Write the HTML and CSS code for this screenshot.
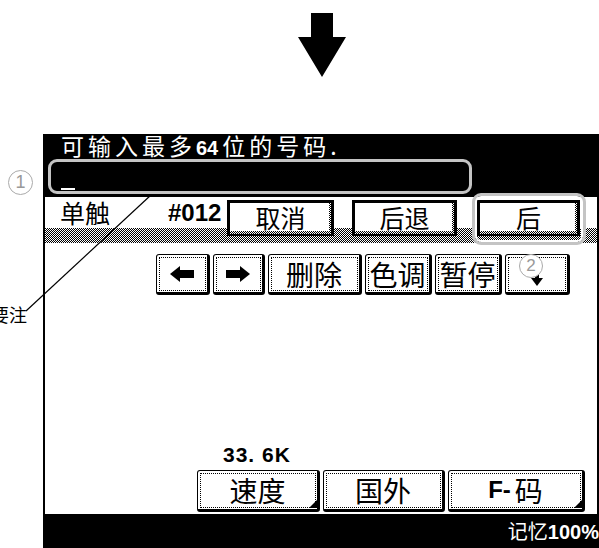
FILE: index.html
```html
<!DOCTYPE html>
<html lang="zh">
<head>
  <meta charset="UTF-8">
  <title>单触</title>
  <link rel="stylesheet" href="styles.css">
</head>
<body>
  <div id="page">
    <div class="drop">
      <svg width="48" height="64" viewBox="0 0 48 64"><path d="M13 0H35V24H48L24 64L0 24H13Z"/></svg>
    </div>

    <div id="screen">
      <div class="head">
        <div class="title">可输入最多<b>64</b>位的号码.</div>
        <div class="field"><span class="cursor"></span></div>
      </div>

      <div class="row2">
        <span class="label">单触</span>
        <span class="num">#012</span>
        <div class="key k-cancel">取消</div>
        <div class="key k-back">后退</div>
        <div class="key k-next">后</div>
      </div>

      <div class="body">
        <div class="tools">
          <div class="pad p-arrow">
            <svg width="24" height="16" viewBox="0 0 24 16"><path d="M0 8L10 0V4H24V12H10V16Z"/></svg>
          </div>
          <div class="pad p-arrow2">
            <svg width="24" height="16" viewBox="0 0 24 16"><path d="M24 8L14 0V4H0V12H14V16Z"/></svg>
          </div>
          <div class="pad p-del">删除</div>
          <div class="pad p-tone">色调</div>
          <div class="pad p-pause">暂停</div>
          <div class="pad p-down">
            <svg width="12" height="22" viewBox="0 0 12 22"><path d="M4 0H8V14H12L6 22L0 14H4Z"/></svg>
          </div>
        </div>

        <div class="speed">33. 6K</div>

        <div class="opts">
          <div class="pad opt o-speed more">速度</div>
          <div class="pad opt o-intl">国外</div>
          <div class="pad opt o-fcode more"><b>F-</b>码</div>
        </div>
      </div>

      <div class="status">记忆<b>100%</b></div>
    </div>

    <!-- 标注 -->
    <svg class="leader" width="599" height="548" viewBox="0 0 599 548"><line x1="151" y1="195" x2="26" y2="311"/></svg>
    <div class="note">要注</div>
    <div class="mark m1">1</div>
    <div class="ring"></div>
    <div class="mark m2">2</div>
  </div>
</body>
</html>
```

FILE: styles.css
```css
*{margin:0;padding:0;}
body{background:#fff;font-family:"Noto Sans CJK SC",sans-serif;color:#000;}

#page{width:599px;height:548px;position:relative;overflow:hidden;}
.drop{padding:13px 0 0 298px;height:64px;}
.drop svg{display:block;fill:#000;}

#screen{margin:57px 0 0 43px;width:556px;background:#000;}

.head{height:63px;}
.title{height:25px;padding-left:18px;color:#fff;font-size:23px;line-height:22px;letter-spacing:4px;white-space:nowrap;}
.title b{font-family:"Liberation Sans",sans-serif;font-size:20px;letter-spacing:0;margin:0 4px 0 0;}
.field{box-sizing:border-box;margin-left:5px;width:424px;height:35px;border:3px solid #c4c4c4;border-radius:9px;position:relative;}
.cursor{display:block;position:absolute;left:10px;bottom:1px;width:14px;height:2px;background:#fff;}

.row2{display:flex;align-items:flex-start;height:46px;margin:0 2px;
  background:linear-gradient(#fff,#fff) 0 0/100% 31px no-repeat,repeating-conic-gradient(#000 0 25%,#fff 0 50%) 0 0/2px 2px;}
.label{width:108px;padding-left:15px;font-size:25px;line-height:30px;}
.num{width:59px;font:bold 24px/32px "Liberation Sans",sans-serif;}
.key{box-sizing:border-box;height:36px;margin-top:3px;border:3px solid #000;border-bottom-width:2px;
  background:linear-gradient(#fff,#fff) 0 0/calc(100% - 2px) calc(100% - 3px) no-repeat,repeating-conic-gradient(#000 0 25%,#fff 0 50%) 0 0/2px 2px;
  font-size:25px;line-height:29px;text-align:center;}
.k-cancel{width:107px;}
.k-back{width:105px;margin-left:18px;}
.k-next{width:103px;margin-left:20px;}

.body{height:271px;margin:0 2px;background:#fff;}
.tools{display:flex;gap:3px;padding:11px 0 0 111px;}
.pad{position:relative;box-sizing:border-box;height:41px;border:1px solid #000;border-right-width:3px;border-bottom-width:3px;border-radius:3px;
  background:#fff;display:flex;align-items:center;justify-content:center;font-size:28px;line-height:1;}
.pad::before{content:"";position:absolute;top:2px;left:2px;right:1px;bottom:1px;border:1px dotted #000;}
.pad svg{display:block;fill:#000;}
.p-arrow{width:54px;}
.p-arrow2{width:52px;}
.p-del{width:94px;}
.p-tone{width:67px;}
.p-pause{width:67px;}
.p-down{width:65px;align-items:flex-end;padding-bottom:6px;}

.speed{height:20px;margin-top:150px;padding-left:178px;font:bold 21px/20px "Liberation Sans",sans-serif;letter-spacing:1px;}

.opts{display:flex;gap:3px;padding:5px 0 0 152px;}
.opt{height:42px;}
.opt b{font:bold 24px "Liberation Sans",sans-serif;margin-right:4px;}
.o-speed{width:123px;}
.o-intl{width:122px;}
.o-fcode{width:137px;}
.more::after{content:"";position:absolute;right:0;bottom:1px;width:0;height:0;border-left:8px solid transparent;border-bottom:8px solid #000;}

.status{height:34px;color:#fff;text-align:right;font-size:20px;line-height:34px;white-space:nowrap;}
.status b{font-family:"Liberation Sans",sans-serif;font-size:20px;}

.leader{position:absolute;left:0;top:0;}
.leader line{stroke:#000;stroke-width:1.2;}
.note{position:absolute;left:-9px;top:302px;font-size:18px;line-height:24px;}
.mark{position:absolute;box-sizing:border-box;width:25px;height:25px;border:1.5px solid #aaa;border-radius:50%;background:#fff;
  color:#999;font:18px/22px "Liberation Sans",sans-serif;text-align:center;}
.m1{left:8px;top:170px;}
.m2{left:519px;top:254px;width:24px;height:24px;font-size:17px;line-height:21px;}
.ring{position:absolute;box-sizing:border-box;left:472px;top:193px;width:114px;height:52px;border:3px solid #c4c4c4;border-radius:9px;box-shadow:inset 0 0 0 2px #fff;}
```
